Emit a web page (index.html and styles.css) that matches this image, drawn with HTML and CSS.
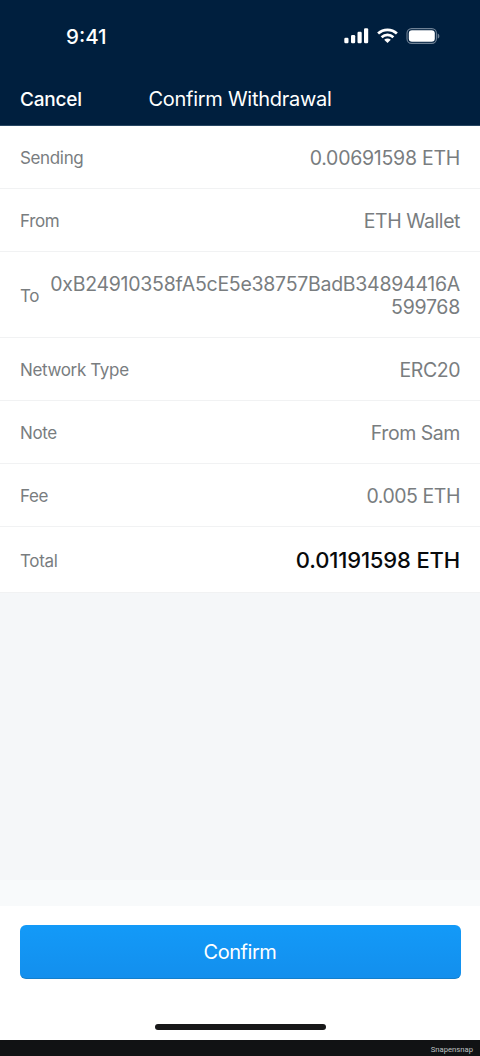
FILE: index.html
```html
<!DOCTYPE html>
<html lang="en">
<head>
<meta charset="utf-8">
<title>Confirm Withdrawal</title>
<link rel="stylesheet" href="styles.css">
</head>
<body>
<div class="screen">
  <header class="header">
    <div class="status">
      <span class="time">9:41</span>
      <div class="status-icons">
        <svg width="25" height="16" viewBox="0 0 25 16" fill="#fff"><rect x="0.3" y="9.8" width="4.2" height="5.4" rx="1.2"/><rect x="7" y="7" width="4.2" height="8.2" rx="1.2"/><rect x="13.5" y="3.8" width="4.2" height="11.4" rx="1.2"/><rect x="20" y="0.2" width="4.2" height="15" rx="1.2"/></svg>
        <svg width="21" height="16" viewBox="0 0 21 16" fill="none" stroke="#fff" stroke-width="2.7"><path d="M1.1 5.6C6.4 .6 14.6 .6 19.9 5.6"/><path d="M4.6 9.2C8 6.1 13 6.1 16.4 9.2"/><path d="M10.5 15 7.2 11.8C9.1 10.2 11.9 10.2 13.8 11.8Z" fill="#fff" stroke="none"/></svg>
        <svg width="34" height="16" viewBox="0 0 34 16"><rect x="1" y=".6" width="29.4" height="14.8" rx="4.6" fill="none" stroke="#6e8195" stroke-width="1.1"/><rect x="2.8" y="2.3" width="26" height="11.4" rx="3.2" fill="#fff"/><path d="M31.7 5.4C33.9 6.3 33.9 9.7 31.7 10.6Z" fill="#6e8195"/></svg>
      </div>
    </div>
    <nav class="nav">
      <span class="cancel">Cancel</span>
      <h1 class="title">Confirm Withdrawal</h1>
    </nav>
  </header>
  <main class="details">
    <div class="row"><span class="label">Sending</span><span class="value amount">0.00691598 ETH</span></div>
    <div class="row"><span class="label">From</span><span class="value">ETH Wallet</span></div>
    <div class="row row-address"><span class="label">To</span><span class="value address">0xB24910358fA5cE5e38757BadB34894416A<br>599768</span></div>
    <div class="row"><span class="label network">Network Type</span><span class="value">ERC20</span></div>
    <div class="row"><span class="label">Note</span><span class="value">From Sam</span></div>
    <div class="row"><span class="label">Fee</span><span class="value">0.005 ETH</span></div>
    <div class="row row-total"><span class="label">Total</span><span class="value total">0.01191598 ETH</span></div>
  </main>
  <div class="fade"></div>
  <footer class="footer">
    <button class="confirm">Confirm</button>
    <div class="home"></div>
  </footer>
  <div class="credit">Snapensnap</div>
</div>
</body>
</html>
```
FILE: styles.css
```css
* { box-sizing: border-box; }
body { margin: 0; font-family: Inter, "Liberation Sans", sans-serif; }
.screen { width: 480px; height: 1056px; display: flex; flex-direction: column; background: #f5f7f9; }
.header { height: 126px; background: #001f3e; border-bottom: 1px solid #284763; color: #fff; }
.status { height: 71px; padding: 0 40px 0 66px; display: flex; align-items: center; justify-content: space-between; }
.time { padding-top: 1px; font-size: 20.5px; font-weight: 550; letter-spacing: 0; }
.status-icons { display: flex; gap: 8px; }
.nav { height: 54px; padding: 2px 20px 0; display: grid; grid-template-columns: 1fr auto 1fr; align-items: center; }
.cancel { font-size: 19px; font-weight: 500; letter-spacing: -.2px; }
.title { margin: 0; font-size: 20px; font-weight: 400; letter-spacing: -.28px; }
.details { background: #fff; }
.row { height: 63px; padding: 2px 20px 0; display: flex; align-items: center; justify-content: space-between; border-bottom: 1px solid #f1f2f3; color: #797d7f; }
.row-address { height: 86px; padding-top: 3px; }
.row-total { height: 66px; }
.label { font-size: 17px; letter-spacing: -.35px; }
.value { font-size: 19.5px; line-height: 23px; letter-spacing: -.45px; text-align: right; }
.amount { letter-spacing: -.26px; }
.address { letter-spacing: -.27px; }
.total { font-size: 22px; font-weight: 500; letter-spacing: -.15px; color: #080a0b; }
.fade { height: 26px; margin-top: auto; background: #f8fafb; }
.footer { height: 134px; padding: 19px 19px 0; background: #fff; display: flex; flex-direction: column; align-items: center; }
.confirm { width: 441px; height: 54px; flex: none; padding: 0; border: 0; border-radius: 6px; border-bottom: 1px solid #147fcb; background: linear-gradient(#139af8, #138fed); color: #fff; font: 400 20px Inter, sans-serif; letter-spacing: -.45px; }
.home { width: 171px; height: 6px; margin-top: 45px; border-radius: 3px; background: #171718; }
.credit { height: 16px; padding: 3px 7px 0 0; background: #111214; color: #bfc0c2; text-align: right; font: 7.7px/14px Roboto, sans-serif; }
```
